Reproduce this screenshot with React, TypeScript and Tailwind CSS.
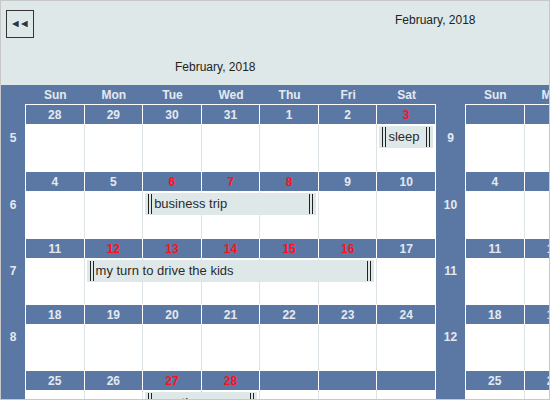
import React from "react";

type CalEvent = { col: number; span: number; title: string };
type Week = { num: number; days: string[]; red: number[]; events: CalEvent[] };

const colStart = ["col-start-1", "col-start-2", "col-start-3", "col-start-4", "col-start-5", "col-start-6", "col-start-7"];
const colSpan = ["col-span-1", "col-span-2", "col-span-3", "col-span-4", "col-span-5", "col-span-6", "col-span-7"];
const bodyHeights = ["h-[47px]", "h-[47px]", "h-[46px]", "h-[46px]", "h-[47px]"];
const dayNames = ["Sun", "Mon", "Tue", "Wed", "Thu", "Fri", "Sat"];

const firstMonth: Week[] = [
  { num: 5, days: ["28", "29", "30", "31", "1", "2", "3"], red: [6], events: [{ col: 6, span: 1, title: "sleep" }] },
  { num: 6, days: ["4", "5", "6", "7", "8", "9", "10"], red: [2, 3, 4], events: [{ col: 2, span: 3, title: "business trip" }] },
  { num: 7, days: ["11", "12", "13", "14", "15", "16", "17"], red: [1, 2, 3, 4, 5], events: [{ col: 1, span: 5, title: "my turn to drive the kids" }] },
  { num: 8, days: ["18", "19", "20", "21", "22", "23", "24"], red: [], events: [] },
  { num: 9, days: ["25", "26", "27", "28", "", "", ""], red: [2, 3], events: [{ col: 2, span: 2, title: "vacation" }] },
];

const secondMonth: Week[] = [
  { num: 9, days: ["", "", "", "", "1", "2", "3"], red: [], events: [] },
  { num: 10, days: ["4", "5", "6", "7", "8", "9", "10"], red: [], events: [] },
  { num: 11, days: ["11", "12", "13", "14", "15", "16", "17"], red: [], events: [] },
  { num: 12, days: ["18", "19", "20", "21", "22", "23", "24"], red: [], events: [] },
  { num: 13, days: ["25", "26", "27", "28", "", "", ""], red: [], events: [] },
];

function PrevIcon() {
  return (
    <svg width="16" height="6" viewBox="0 0 16 6">
      <polygon points="0,3 6,0 6,6" fill="#333" />
      <rect x="6" y="0" width="1" height="6" fill="#3f6fa8" />
      <polygon points="9,3 15,0 15,6" fill="#333" />
      <rect x="15" y="0" width="1" height="6" fill="#3f6fa8" />
    </svg>
  );
}

function EventBar({ ev }: { ev: CalEvent }) {
  return (
    <div
      className={`${colStart[ev.col]} ${colSpan[ev.span - 1]} row-start-1 ml-[2px] mr-[3px] mt-[2px] h-[22px] bg-[#dfe8e8] flex items-stretch px-[3px] py-[1px] overflow-hidden z-10`}
    >
      <div className="w-[4px] shrink-0 border-l border-r border-[#222]" />
      <div className="ml-[2px] flex items-center text-[13px] text-[#2b2b2b] whitespace-nowrap">{ev.title}</div>
      <div className="flex-1" />
      <div className="w-[4px] shrink-0 border-l border-r border-[#222]" />
    </div>
  );
}

function Month({ weeks, weekColClass }: { weeks: Week[]; weekColClass: string }) {
  return (
    <div className="flex flex-col shrink-0">
      <div className="flex h-[19px]">
        <div className={`${weekColClass} shrink-0`} />
        <div className="w-[411px] pl-[1px] grid grid-cols-7">
          {dayNames.map((d) => (
            <div key={d} className="flex items-center justify-center text-[12px] font-bold text-[#e2eaf1]">
              {d}
            </div>
          ))}
        </div>
      </div>
      {weeks.map((w, wi) => (
        <div key={w.num} className="flex">
          <div className={`${weekColClass} shrink-0 flex items-center justify-center text-[12px] font-bold text-[#e2eaf1]`}>
            {w.num}
          </div>
          <div className="w-[411px] border-l border-white flex flex-col">
            <div className="h-[20px] border-t border-white grid grid-cols-7">
              {w.days.map((d, di) => (
                <div
                  key={di}
                  className={`border-r border-white flex items-center justify-center text-[12px] font-bold ${
                    w.red.includes(di) ? "text-[#ff1020]" : "text-[#e2eaf1]"
                  }`}
                >
                  {d}
                </div>
              ))}
            </div>
            <div className={`${bodyHeights[wi]} bg-white grid grid-cols-7 grid-rows-[26px_1fr]`}>
              {w.days.map((_, di) => (
                <div
                  key={di}
                  className={`${colStart[di]} row-start-1 row-span-2 border-r ${di === 6 ? "border-white" : "border-[#dbe3e6]"}`}
                />
              ))}
              {w.events.map((ev) => (
                <EventBar key={ev.title} ev={ev} />
              ))}
            </div>
          </div>
        </div>
      ))}
    </div>
  );
}

export default function App() {
  return (
    <div
      className="w-[550px] h-[400px] border border-[#c8c8c8] overflow-hidden bg-[#5b78a5] flex flex-col"
      style={{ fontFamily: '"Liberation Sans", Arial, sans-serif' }}
    >
      <div className="h-[84px] shrink-0 bg-[#dfe8e8] text-[12px] leading-[14px] text-[#222]">
        <div className="flex items-start">
          <button className="ml-[5px] mt-[9px] w-[28px] h-[28px] shrink-0 border border-[#333] flex items-center justify-center">
            <PrevIcon />
          </button>
          <div className="ml-[361px] mt-[12px] whitespace-nowrap">February, 2018</div>
        </div>
        <div className="ml-[174px] mt-[22px] whitespace-nowrap">February, 2018</div>
      </div>
      <div className="flex">
        <Month weeks={firstMonth} weekColClass="w-[24px]" />
        <Month weeks={secondMonth} weekColClass="w-[29px]" />
      </div>
    </div>
  );
}
